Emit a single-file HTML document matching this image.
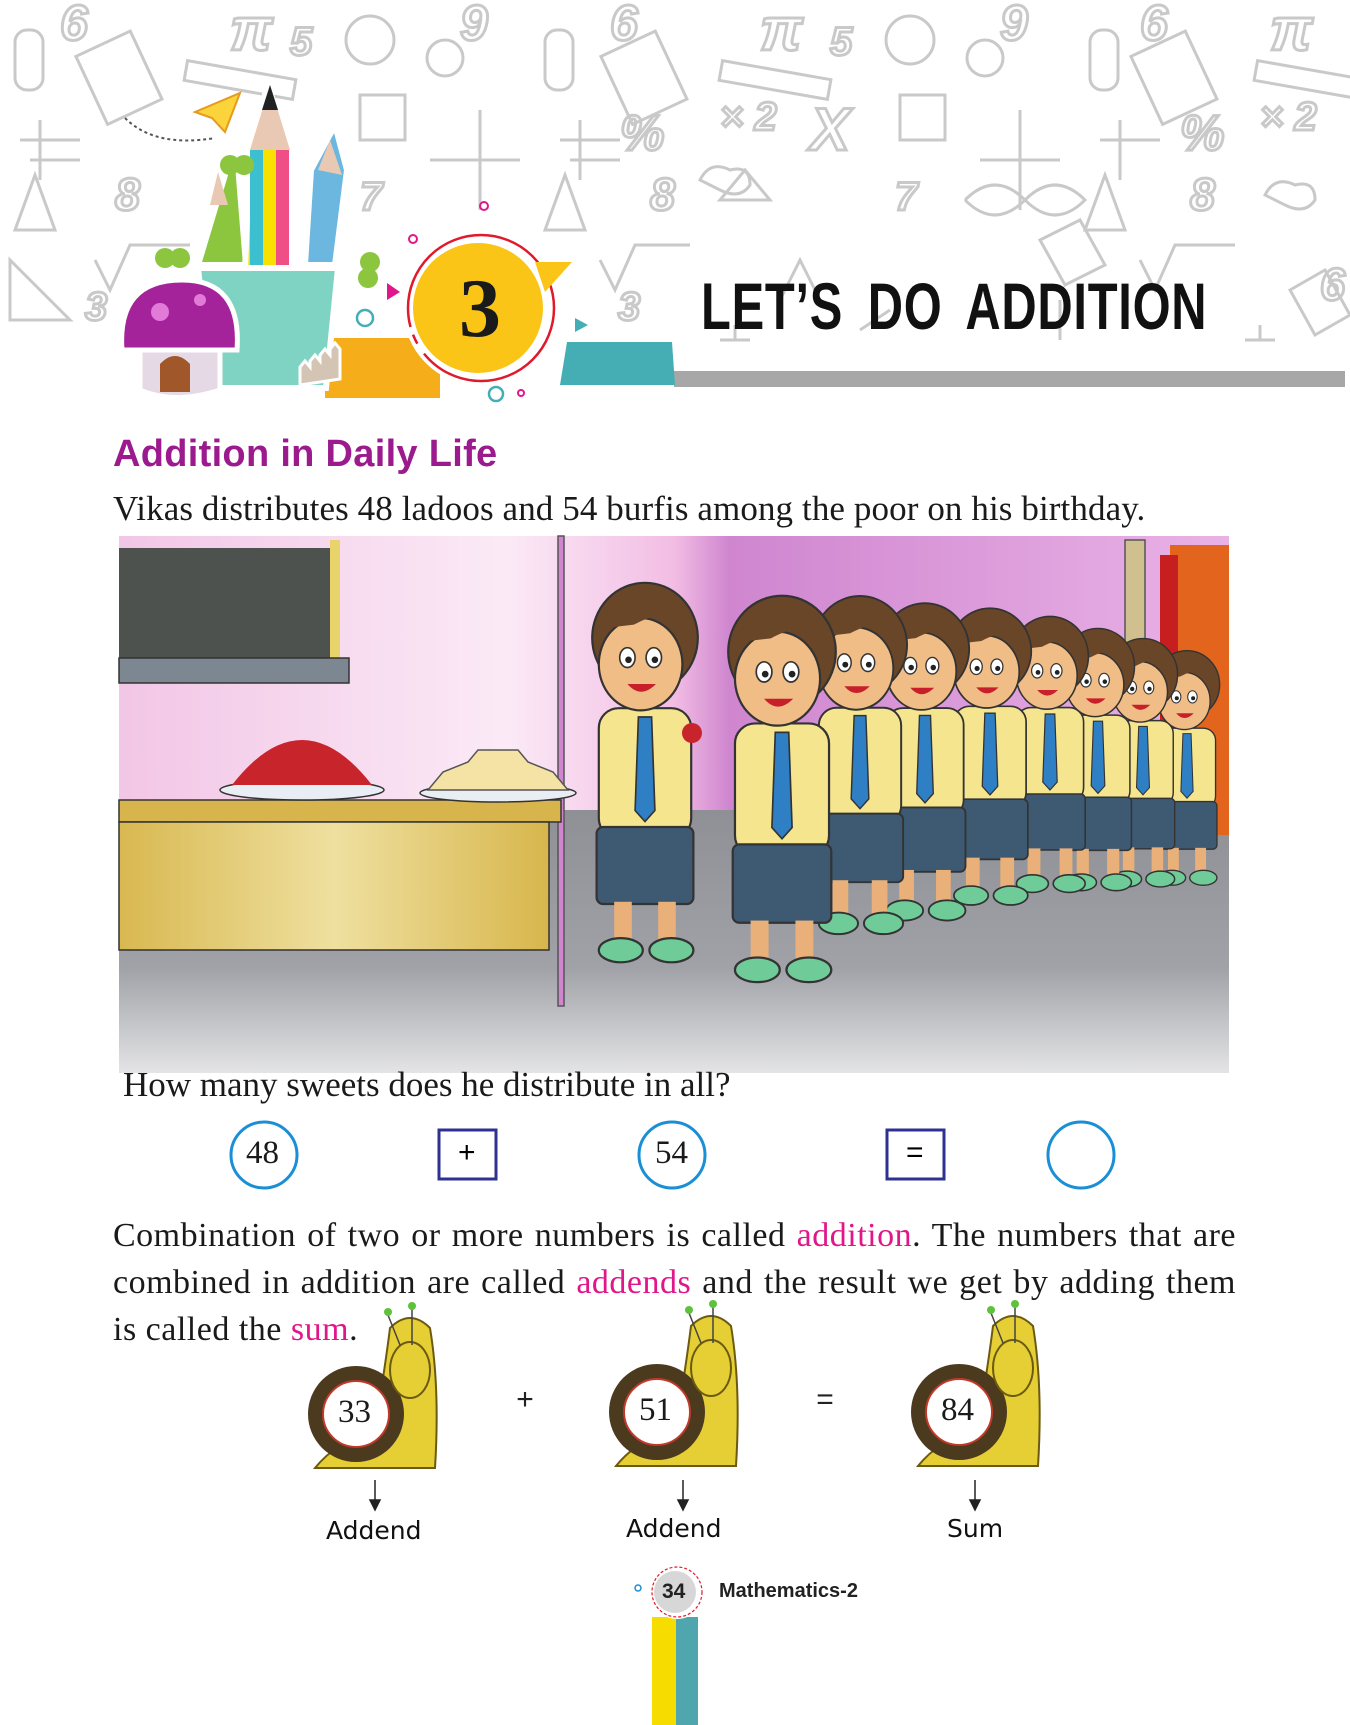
<!DOCTYPE html>
<html><head><meta charset="utf-8">
<style>
html,body{margin:0;padding:0;background:#fff;}
body{width:1350px;height:1725px;position:relative;overflow:hidden;font-family:"Liberation Serif",serif;}
.abs{position:absolute;white-space:nowrap;}
.serif{font-family:"Liberation Serif",serif;color:#1a1a1a;}
.pk{color:#e0168a;}
</style></head><body>
<svg class="abs" style="left:0;top:0" width="1350" height="1725" viewBox="0 0 1350 1725">
<defs>
<linearGradient id="wall" x1="0" y1="0" x2="1" y2="0">
<stop offset="0" stop-color="#f2c6e6"/><stop offset="0.35" stop-color="#fbeaf6"/><stop offset="0.5" stop-color="#f2bde4"/><stop offset="0.55" stop-color="#cf86cf"/><stop offset="1" stop-color="#e9b2e6"/></linearGradient>
<linearGradient id="floor" x1="0" y1="0" x2="0" y2="1">
<stop offset="0" stop-color="#8e9096"/><stop offset="0.6" stop-color="#a0a2a7"/><stop offset="1" stop-color="#e4e4e6"/></linearGradient>
<linearGradient id="table" x1="0" y1="0" x2="1" y2="0">
<stop offset="0" stop-color="#d8b850"/><stop offset="0.5" stop-color="#efe0a0"/><stop offset="1" stop-color="#d7b64c"/></linearGradient>
<g id="kid">
<rect x="-42" y="112" width="84" height="118" rx="18" fill="#f6e58f" stroke="#333" stroke-width="2"/>
<polygon points="-6,120 6,120 9,205 0,215 -9,205" fill="#2f7fc4" stroke="#333" stroke-width="1.5"/>
<rect x="-44" y="220" width="88" height="70" rx="6" fill="#3e5a73" stroke="#333" stroke-width="2"/>
<rect x="-28" y="288" width="16" height="38" fill="#e9b07a"/>
<rect x="12" y="288" width="16" height="38" fill="#e9b07a"/>
<ellipse cx="-22" cy="332" rx="20" ry="11" fill="#6fcb98" stroke="#333" stroke-width="2"/>
<ellipse cx="24" cy="332" rx="20" ry="11" fill="#6fcb98" stroke="#333" stroke-width="2"/>
<ellipse cx="0" cy="48" rx="48" ry="50" fill="#6a4628" stroke="#333" stroke-width="2"/>
<ellipse cx="-4" cy="72" rx="38" ry="42" fill="#f0bd86" stroke="#333" stroke-width="2"/>
<path d="M-44,40 Q-10,0 44,30 Q20,20 -10,36 Z" fill="#6a4628"/>
<ellipse cx="-16" cy="66" rx="7" ry="9" fill="#fff" stroke="#333" stroke-width="1.5"/>
<ellipse cx="8" cy="66" rx="7" ry="9" fill="#fff" stroke="#333" stroke-width="1.5"/>
<circle cx="-15" cy="68" r="3" fill="#222"/><circle cx="9" cy="68" r="3" fill="#222"/>
<path d="M-16,90 Q-4,104 10,90 Z" fill="#c8202a"/>
</g>
<g id="snail">
<path d="M315 1468 q20 -25 60 -40 q10 -60 15 -100 q20 -20 40 0 q10 60 5 140 z" fill="#e5cf35" stroke="#6b5a10" stroke-width="2"/>
<circle cx="356" cy="1414" r="48" fill="#4b3a1e"/>
<circle cx="356" cy="1414" r="33" fill="#fff" stroke="#c0392b" stroke-width="2"/>
<ellipse cx="410" cy="1370" rx="20" ry="28" fill="#e5cf35" stroke="#6b5a10" stroke-width="2"/>
<path d="M400 1345 l-12 -30 M412 1345 l0 -38" stroke="#444" stroke-width="1.5"/>
<circle cx="388" cy="1312" r="4" fill="#5ec23a"/><circle cx="412" cy="1306" r="4" fill="#5ec23a"/>
</g>
</defs>

<g fill="none" stroke="#c9c9c9" stroke-width="3" font-family="Liberation Sans,sans-serif" font-style="italic" font-weight="bold">
<text x="60" y="40" font-size="50" fill="#fff">6</text>
<text x="230" y="50" font-size="60" fill="#fff">π</text>
<text x="290" y="55" font-size="40" fill="#fff">5</text>
<text x="460" y="40" font-size="50" fill="#fff">9</text>
<text x="610" y="40" font-size="50" fill="#fff">6</text>
<text x="760" y="50" font-size="60" fill="#fff">π</text>
<text x="830" y="55" font-size="40" fill="#fff">5</text>
<text x="1000" y="40" font-size="50" fill="#fff">9</text>
<text x="1140" y="40" font-size="50" fill="#fff">6</text>
<text x="1270" y="50" font-size="60" fill="#fff">π</text>
<text x="720" y="130" font-size="40" fill="#fff">× 2</text>
<text x="810" y="150" font-size="60" fill="#fff">X</text>
<text x="1260" y="130" font-size="40" fill="#fff">× 2</text>
<text x="620" y="150" font-size="50" fill="#fff">%</text>
<text x="1180" y="150" font-size="50" fill="#fff">%</text>
<text x="115" y="210" font-size="45" fill="#fff">8</text>
<text x="650" y="210" font-size="45" fill="#fff">8</text>
<text x="1190" y="210" font-size="45" fill="#fff">8</text>
<text x="360" y="210" font-size="40" fill="#fff">7</text>
<text x="895" y="210" font-size="40" fill="#fff">7</text>
<text x="85" y="320" font-size="40" fill="#fff">3</text>
<text x="618" y="320" font-size="40" fill="#fff">3</text>
<text x="1320" y="300" font-size="45" fill="#fff">6</text>
<rect x="15" y="30" width="28" height="60" rx="12"/>
<rect x="545" y="30" width="28" height="60" rx="12"/>
<rect x="1090" y="30" width="28" height="60" rx="12"/>
<rect x="90" y="40" width="60" height="75" transform="rotate(-25 120 80)"/>
<rect x="615" y="40" width="60" height="75" transform="rotate(-25 645 80)"/>
<rect x="1145" y="40" width="60" height="75" transform="rotate(-25 1175 80)"/>
<rect x="185" y="70" width="110" height="20" transform="rotate(10 240 80)"/>
<rect x="720" y="70" width="110" height="20" transform="rotate(10 775 80)"/>
<rect x="1255" y="70" width="110" height="20" transform="rotate(10 1310 80)"/>
<circle cx="370" cy="40" r="24"/><circle cx="910" cy="40" r="24"/>
<circle cx="445" cy="58" r="18"/><circle cx="985" cy="58" r="18"/>
<rect x="360" y="95" width="45" height="45"/><rect x="900" y="95" width="45" height="45"/>
<path d="M40 120 L40 180 M20 140 L80 140 M30 160 L80 160"/>
<path d="M580 120 L580 180 M560 140 L620 140 M570 160 L620 160"/>
<path d="M1120 120 L1120 180 M1100 140 L1160 140"/>
<path d="M430 160 L520 160 M480 110 L480 210"/><path d="M980 160 L1060 160 M1020 110 L1020 210"/>
<path d="M15 230 L35 175 L55 230 Z"/><path d="M545 230 L565 175 L585 230 Z"/><path d="M1085 230 L1105 175 L1125 230 Z"/>
<path d="M95 260 L110 290 L130 245 L190 245"/><path d="M600 260 L615 290 L635 245 L690 245"/>
<path d="M1140 260 L1155 290 L1175 245 L1235 245"/>
<path d="M10 260 L10 320 L70 320 Z"/>
<path d="M965 200 q30 -30 60 0 q30 30 60 0 q-30 -30 -60 0 q-30 30 -60 0"/>
<path d="M720 200 l25 -30 l25 30 z"/><path d="M1265 195 q10 -20 30 -10 q20 -5 20 15 q-10 15 -30 5 z"/>
<path d="M700 180 q10 -20 30 -10 q20 -5 20 15 q-10 15 -30 5 z"/>
<path d="M1040 240 l40 -20 l25 45 l-40 20z"/><path d="M1290 290 l35 -20 l25 45 l-35 20z"/>
<path d="M720 340 l30 0 M735 325 l0 15"/><path d="M1245 340 l30 0 M1260 325 l0 15"/>
<path d="M780 300 l20 -40 l20 40 M860 330 l30 -20 M1060 300 l0 40"/>
</g>

<rect x="674" y="371" width="671" height="16" fill="#a7a7a7"/>

<path d="M125 118 q30 30 90 20" fill="none" stroke="#555" stroke-width="2" stroke-dasharray="3 3"/>
<polygon points="195,112 240,93 225,132 212,118" fill="#fbd33a" stroke="#e59b1d" stroke-width="2"/>
<rect x="325" y="338" width="115" height="60" fill="#f5ae1a"/>
<polygon points="567,342 672,342 675,385 560,385" fill="#45aeb5"/>
<g stroke="#fff" stroke-width="6">
<path d="M198 265 l30 -100 l0 0 l10 0 l8 100 z" fill="#8cc63f"/>
<path d="M245 270 l5 -130 l18 -55 l18 55 l5 130 z" fill="#f9e000"/>
<path d="M305 265 l6 -95 l24 -45 l12 45 l-12 95 z" fill="#6bb7df"/>
</g>
<rect x="250" y="150" width="13" height="115" fill="#3cc0cf"/><rect x="263" y="150" width="13" height="115" fill="#f9e000"/><rect x="276" y="150" width="13" height="115" fill="#f04f86"/>
<polygon points="250,150 270,85 290,150" fill="#e9c9b4"/><polygon points="262,110 270,85 278,110" fill="#222"/>
<polygon points="210,205 218,172 228,205" fill="#e9c9b4"/><polygon points="318,170 330,140 342,175" fill="#e9c9b4"/>
<path d="M198 268 l140 0 l-12 120 l-115 0 z" fill="#7fd3c2" stroke="#fff" stroke-width="6"/>
<circle cx="230" cy="165" r="10" fill="#8cc63f"/><circle cx="244" cy="165" r="10" fill="#8cc63f"/>
<circle cx="165" cy="258" r="10" fill="#8cc63f"/><circle cx="180" cy="258" r="10" fill="#8cc63f"/>
<circle cx="370" cy="262" r="10" fill="#8cc63f"/><circle cx="368" cy="278" r="10" fill="#8cc63f"/>
<path d="M140 345 l0 45 q35 15 80 0 l0 -45 z" fill="#e6d9e6" stroke="#fff" stroke-width="5"/>
<path d="M160 392 l0 -28 q15 -16 30 0 l0 28 z" fill="#a0572a"/>
<path d="M122 350 q-5 -70 60 -70 q60 0 55 70 z" fill="#a5239a" stroke="#fff" stroke-width="5"/>
<circle cx="160" cy="312" r="9" fill="#e27ad8"/><circle cx="200" cy="300" r="6" fill="#e27ad8"/>
<path d="M300 385 l0 -18 l5 -6 l5 6 l0 -6 l5 -6 l5 6 l0 -6 l5 -6 l5 6 l0 -6 l5 -6 l5 6 l0 30 z" fill="#d4c4b4" stroke="#fff" stroke-width="3"/>
<circle cx="481" cy="308" r="78" fill="#fff"/>
<circle cx="481" cy="308" r="73" fill="none" stroke="#e1192c" stroke-width="2.5" stroke-dasharray="180 12 10 8 300"/>
<circle cx="478" cy="308" r="65" fill="#fac516"/>
<polygon points="535,262 572,262 545,292" fill="#fac516"/>
<circle cx="484" cy="206" r="4" fill="none" stroke="#e0168a" stroke-width="2"/>
<circle cx="413" cy="239" r="4" fill="none" stroke="#e0168a" stroke-width="2"/>
<polygon points="387,283 400,292 387,300" fill="#e0168a"/>
<polygon points="575,318 588,325 575,332" fill="#45aeb5"/>
<circle cx="365" cy="318" r="8" fill="none" stroke="#45aeb5" stroke-width="2.5"/>
<circle cx="496" cy="394" r="7" fill="none" stroke="#45aeb5" stroke-width="2.5"/>
<circle cx="521" cy="393" r="3" fill="none" stroke="#e0168a" stroke-width="2"/>
<text x="480" y="336" text-anchor="middle" font-family="Liberation Serif,serif" font-weight="bold" font-size="84" fill="#1a1a1a">3</text>

<rect x="119" y="536" width="1110" height="290" fill="url(#wall)"/>
<rect x="119" y="810" width="1110" height="263" fill="url(#floor)"/>
<rect x="119" y="548" width="220" height="110" fill="#4d524f"/>
<rect x="330" y="540" width="10" height="118" fill="#e8d46a"/>
<rect x="119" y="658" width="230" height="25" fill="#7c8791" stroke="#333" stroke-width="1.5"/>
<rect x="558" y="536" width="6" height="470" fill="#cf86cf" stroke="#555" stroke-width="1.5"/>
<rect x="1125" y="540" width="20" height="290" fill="#d1c08f" stroke="#555" stroke-width="1.5"/>
<rect x="1170" y="545" width="59" height="290" fill="#e3651d"/>
<rect x="1160" y="555" width="18" height="280" fill="#c71f1f"/>
<rect x="119" y="800" width="442" height="22" fill="#d8b44c" stroke="#333" stroke-width="1.5"/>
<rect x="119" y="822" width="430" height="128" fill="url(#table)" stroke="#333" stroke-width="1.5"/>
<ellipse cx="302" cy="790" rx="82" ry="10" fill="#e8eef4" stroke="#333" stroke-width="1.5"/>
<path d="M232 785 q70 -90 140 0 z" fill="#c8242c"/>
<ellipse cx="498" cy="793" rx="78" ry="9" fill="#e8eef4" stroke="#333" stroke-width="1.5"/>
<path d="M428 790 l15 -18 l25 -10 l10 -12 l40 0 l10 12 l25 10 l15 18 z" fill="#f5e3a6" stroke="#555" stroke-width="1.5"/>
<use href="#kid" transform="translate(1187 652) scale(0.68)"/>
<use href="#kid" transform="translate(1143 640) scale(0.72)"/>
<use href="#kid" transform="translate(1098 630) scale(0.76)"/>
<use href="#kid" transform="translate(1050 618) scale(0.8)"/>
<use href="#kid" transform="translate(990 610) scale(0.86)"/>
<use href="#kid" transform="translate(925 605) scale(0.92)"/>
<use href="#kid" transform="translate(860 598) scale(0.98)"/>
<use href="#kid" transform="translate(782 598) scale(1.12)"/>
<use href="#kid" transform="translate(645 585) scale(1.1)"/>
<circle cx="692" cy="733" r="10" fill="#c8242c"/>

<circle cx="264" cy="1155" r="33" fill="none" stroke="#1b8fd6" stroke-width="3"/>
<rect x="439" y="1130" width="57" height="49" fill="none" stroke="#2e3192" stroke-width="3"/>
<circle cx="672" cy="1155" r="33" fill="none" stroke="#1b8fd6" stroke-width="3"/>
<rect x="887" y="1130" width="57" height="49" fill="none" stroke="#2e3192" stroke-width="3"/>
<circle cx="1081" cy="1155" r="33" fill="none" stroke="#1b8fd6" stroke-width="3"/>

<use href="#snail"/>
<use href="#snail" transform="translate(301 -2)"/>
<use href="#snail" transform="translate(603 -2)"/>
<g stroke="#222" stroke-width="1.5" fill="#222">
<path d="M375 1480 l0 25"/><polygon points="370,1500 380,1500 375,1510"/>
<path d="M683 1480 l0 25"/><polygon points="678,1500 688,1500 683,1510"/>
<path d="M975 1480 l0 25"/><polygon points="970,1500 980,1500 975,1510"/>
</g>
<text x="525" y="1409" text-anchor="middle" font-family="Liberation Sans,sans-serif" font-size="30" fill="#222">+</text>
<text x="825" y="1409" text-anchor="middle" font-family="Liberation Sans,sans-serif" font-size="30" fill="#222">=</text>

<rect x="652" y="1617" width="24" height="108" fill="#f7dc00"/>
<rect x="676" y="1617" width="22" height="108" fill="#4fa7ad"/>
<circle cx="677" cy="1592" r="27" fill="#fff"/>
<circle cx="677" cy="1592" r="25" fill="none" stroke="#e1192c" stroke-width="1.2" stroke-dasharray="3 2"/>
<circle cx="675" cy="1592" r="21" fill="#d7d7d7"/>
<circle cx="638" cy="1588" r="3" fill="none" stroke="#1b8fd6" stroke-width="1.5"/>
</svg>

<div class="abs" style="left:701px;top:268px;font-family:'Liberation Sans',sans-serif;font-weight:bold;font-size:66px;color:#111;transform:scaleX(0.74);transform-origin:0 0;letter-spacing:1px;word-spacing:14px;">LET’S DO ADDITION</div>

<div class="abs" style="left:113px;top:433px;font-family:'Liberation Sans',sans-serif;font-weight:bold;font-size:38px;color:#9b1b8e;letter-spacing:0.3px;">Addition in Daily Life</div>
<div class="abs serif" style="left:113px;top:489px;font-size:35px;letter-spacing:0.1px;">Vikas distributes 48 ladoos and 54 burfis among the poor on his birthday.</div>
<div class="abs serif" style="left:123px;top:1065px;font-size:35px;">How many sweets does he distribute in all?</div>

<div class="abs serif" style="left:246px;top:1135px;font-size:33px;">48</div>
<div class="abs" style="left:458px;top:1136px;font-size:30px;font-family:'Liberation Sans',sans-serif;">+</div>
<div class="abs serif" style="left:655px;top:1135px;font-size:33px;">54</div>
<div class="abs" style="left:906px;top:1136px;font-size:30px;font-family:'Liberation Sans',sans-serif;">=</div>

<div class="abs serif" style="left:113px;top:1212px;width:1123px;font-size:34px;letter-spacing:0.5px;line-height:47px;white-space:normal;text-align:justify;">Combination of two or more numbers is called <span class="pk">addition</span>. The numbers that are combined in addition are called <span class="pk">addends</span> and the result we get by adding them is called the <span class="pk">sum</span>.</div>

<div class="abs serif" style="left:338px;top:1394px;font-size:33px;">33</div>
<div class="abs serif" style="left:639px;top:1392px;font-size:33px;">51</div>
<div class="abs serif" style="left:941px;top:1392px;font-size:33px;">84</div>

<div class="abs" style="left:326px;top:1516px;font-family:'DejaVu Sans',sans-serif;font-size:25px;color:#111;">Addend</div>
<div class="abs" style="left:626px;top:1514px;font-family:'DejaVu Sans',sans-serif;font-size:25px;color:#111;">Addend</div>
<div class="abs" style="left:947px;top:1514px;font-family:'DejaVu Sans',sans-serif;font-size:25px;color:#111;">Sum</div>

<div class="abs" style="left:662px;top:1580px;font-family:'Liberation Sans',sans-serif;font-weight:bold;font-size:21px;color:#222;">34</div>
<div class="abs" style="left:719px;top:1580px;font-family:'Liberation Sans',sans-serif;font-weight:bold;font-size:20px;color:#222;">Mathematics-2</div>
</body></html>
